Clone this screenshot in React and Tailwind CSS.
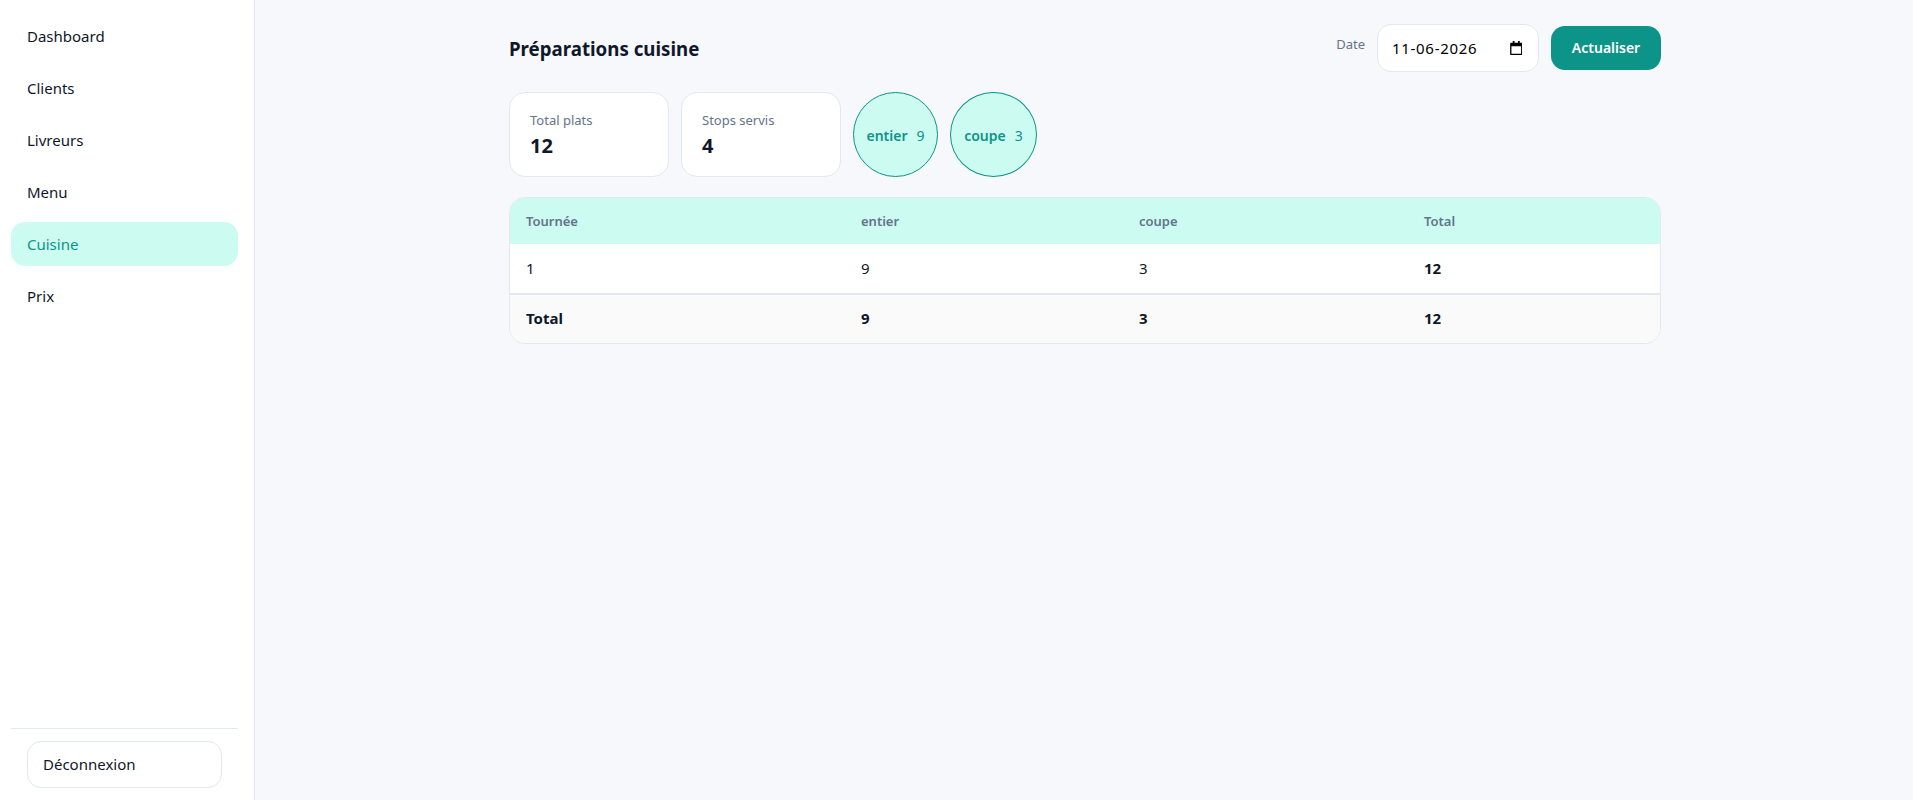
const navItems = ["Dashboard", "Clients", "Livreurs", "Menu", "Cuisine", "Prix"];

const Sidebar = () => (
  <aside className="flex w-[255px] shrink-0 flex-col border-r border-[#e2e8f0] bg-white pb-3 pl-[11px] pr-4 pt-3.5">
    <nav className="flex flex-1 flex-col gap-2">
      {navItems.map((item) => (
        <a
          key={item}
          className={
            item === "Cuisine"
              ? "flex h-11 items-center rounded-[14px] bg-[#ccfbf1] px-4 text-[#0d9488]"
              : "flex h-11 items-center rounded-[14px] px-4 text-[#0f172a]"
          }
        >
          {item}
        </a>
      ))}
    </nav>
    <div className="border-t border-[#e2e8f0] px-4 pt-3">
      <button className="flex h-[47px] w-full items-center rounded-[14px] border border-[#e2e8f0] bg-white pl-[15px] text-[#0f172a]">
        Déconnexion
      </button>
    </div>
  </aside>
);

const CalendarIcon = () => (
  <svg viewBox="0 0 14 16" className="h-3.5 w-[12.5px]" fill="#000">
    <path
      fillRule="evenodd"
      d="M3 0h2v2h4V0h2v2h2a1 1 0 0 1 1 1v12a1 1 0 0 1-1 1H1a1 1 0 0 1-1-1V3a1 1 0 0 1 1-1h2V0ZM1.500 6v8.500h11V6h-11Z"
    />
  </svg>
);

const Stat = ({ label, value }) => (
  <div className="flex h-[85px] w-40 flex-col gap-0.5 rounded-[16px] border border-[#e2e8f0] bg-white px-5 pt-[17px]">
    <span className="text-[13px] leading-5 text-[#64748b]">{label}</span>
    <span className="text-xl font-bold leading-7 text-[#0f172a]">{value}</span>
  </div>
);

const Pill = ({ label, value, width }) => (
  <div
    className={`flex h-[85px] ${width} items-center justify-center gap-[9px] rounded-[50%] border border-[#0d9488] bg-[#ccfbf1] pt-0.5 text-sm text-[#0d9488]`}
  >
    <span className="font-semibold">{label}</span>
    <span>{value}</span>
  </div>
);

const columns = ["w-[335px]", "w-[278px]", "w-[285px]", ""];

const App = () => (
  <div className="flex min-h-[800px] bg-[#f7f8fc] font-['Noto_Sans',sans-serif] text-[15px]">
    <Sidebar />
    <main className="flex-1 pl-0.5 pt-6">
      <div className="mx-auto w-[1152px]">
        <header className="flex h-12 items-center justify-between">
          <h1 className="pt-0.5 text-[18.7px] font-bold text-[#0f172a]">Préparations cuisine</h1>
          <div className="flex items-center gap-3">
            <label className="-mt-1.5 text-[13px] text-[#64748b]">Date</label>
            <div className="flex h-12 w-[162px] items-center justify-between rounded-[14px] border border-[#e2e8f0] bg-white pl-3.5 pr-4 text-[15px] tracking-[0.7px] text-black">
              <span>11-06-2026</span>
              <CalendarIcon />
            </div>
            <button className="h-11 w-[110px] rounded-[14px] bg-[#0d9488] text-sm font-semibold text-white">
              Actualiser
            </button>
          </div>
        </header>

        <section className="mt-5 flex gap-3">
          <Stat label="Total plats" value="12" />
          <Stat label="Stops servis" value="4" />
          <Pill label="entier" value="9" width="w-[85px]" />
          <Pill label="coupe" value="3" width="w-[87px]" />
        </section>

        <div className="mt-5 overflow-hidden rounded-[16px] border border-[#e2e8f0] bg-white">
          <table className="w-full table-fixed border-collapse text-left text-[15px]">
            <thead className="bg-[#ccfbf1]">
              <tr className="h-[46px] text-[13px] text-[#64748b]">
                {["Tournée", "entier", "coupe", "Total"].map((h, i) => (
                  <th key={h} className={`${columns[i]} px-4 pt-0.5 font-semibold`}>
                    {h}
                  </th>
                ))}
              </tr>
            </thead>
            <tbody className="text-[#0f172a]">
              <tr className="h-[50px] border-b-2 border-[#e2e8f0]">
                <td className="px-4">1</td>
                <td className="px-4">9</td>
                <td className="px-4">3</td>
                <td className="px-4 font-bold">12</td>
              </tr>
              <tr className="h-[49px] bg-[#fafafa] font-bold">
                <td className="px-4 pb-0.5">Total</td>
                <td className="px-4 pb-0.5">9</td>
                <td className="px-4 pb-0.5">3</td>
                <td className="px-4 pb-0.5">12</td>
              </tr>
            </tbody>
          </table>
        </div>
      </div>
    </main>
  </div>
);

export default App;
